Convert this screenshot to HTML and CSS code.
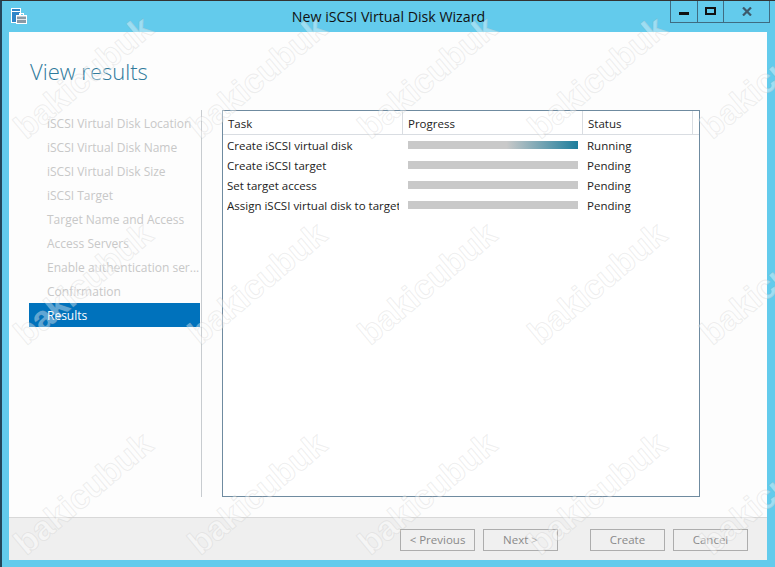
FILE: index.html
```html
<!DOCTYPE html>
<html lang="en">
<head>
<meta charset="utf-8">
<title>New iSCSI Virtual Disk Wizard</title>
<link rel="stylesheet" href="styles.css">
</head>
<body>
<div class="window">
  <header class="titlebar">
    <svg class="app-icon" width="16" height="16" viewBox="0 0 16 16">
      <rect x="0.5" y="0.5" width="9" height="14" fill="#2f86c8" stroke="#fff"/>
      <rect x="1" y="3" width="8" height="1" fill="#fff"/>
      <rect x="5" y="7" width="11" height="9" fill="#fff"/>
      <rect x="6" y="8.5" width="9" height="6.5" fill="#8a9aa6"/>
      <rect x="6" y="11" width="9" height="1" fill="#dfe6ea"/>
      <rect x="8.5" y="5.5" width="4" height="2" fill="none" stroke="#fff"/>
    </svg>
    <h1 class="window-title">New iSCSI Virtual Disk Wizard</h1>
    <div class="caption-buttons">
      <div class="cap cap-min"><span class="min-glyph"></span></div>
      <div class="cap cap-max"><span class="max-glyph"></span></div>
      <div class="cap cap-close">
        <svg width="10" height="9" viewBox="0 0 10 9"><path d="M1 0.5 L9 8.5 M9 0.5 L1 8.5" stroke="#3c5a6c" stroke-width="2.2" fill="none"/></svg>
      </div>
    </div>
  </header>
  <div class="client">
    <main class="content">
      <h2 class="page-title">View results</h2>
      <div class="columns">
        <nav class="steps">
          <div class="step">iSCSI Virtual Disk Location</div>
          <div class="step">iSCSI Virtual Disk Name</div>
          <div class="step">iSCSI Virtual Disk Size</div>
          <div class="step">iSCSI Target</div>
          <div class="step">Target Name and Access</div>
          <div class="step">Access Servers</div>
          <div class="step">Enable authentication ser...</div>
          <div class="step">Confirmation</div>
          <div class="step step-active">Results</div>
        </nav>
        <section class="panel">
          <div class="thead">
            <div class="th th-task">Task</div>
            <div class="th th-progress">Progress</div>
            <div class="th th-status">Status</div>
            <div class="th th-rest"></div>
          </div>
          <div class="row">
            <div class="cell-task">Create iSCSI virtual disk</div>
            <div class="cell-progress"><div class="bar bar-running"></div></div>
            <div class="cell-status">Running</div>
          </div>
          <div class="row">
            <div class="cell-task">Create iSCSI target</div>
            <div class="cell-progress"><div class="bar"></div></div>
            <div class="cell-status">Pending</div>
          </div>
          <div class="row">
            <div class="cell-task">Set target access</div>
            <div class="cell-progress"><div class="bar"></div></div>
            <div class="cell-status">Pending</div>
          </div>
          <div class="row">
            <div class="cell-task">Assign iSCSI virtual disk to target</div>
            <div class="cell-progress"><div class="bar"></div></div>
            <div class="cell-status">Pending</div>
          </div>
        </section>
      </div>
    </main>
    <footer class="footer">
      <button class="btn">&lt; Previous</button>
      <button class="btn">Next &gt;</button>
      <button class="btn btn-create">Create</button>
      <button class="btn">Cancel</button>
    </footer>
  </div>
  <div class="watermarks" aria-hidden="true">
    <span class="wm wm-c1 wm-r1">bakicubuk</span>
    <span class="wm wm-c2 wm-r1">bakicubuk</span>
    <span class="wm wm-c3 wm-r1">bakicubuk</span>
    <span class="wm wm-c4 wm-r1">bakicubuk</span>
    <span class="wm wm-c5 wm-r1">bakicubuk</span>
    <span class="wm wm-c1 wm-r2">bakicubuk</span>
    <span class="wm wm-c2 wm-r2">bakicubuk</span>
    <span class="wm wm-c3 wm-r2">bakicubuk</span>
    <span class="wm wm-c4 wm-r2">bakicubuk</span>
    <span class="wm wm-c5 wm-r2">bakicubuk</span>
    <span class="wm wm-c1 wm-r3">bakicubuk</span>
    <span class="wm wm-c2 wm-r3">bakicubuk</span>
    <span class="wm wm-c3 wm-r3">bakicubuk</span>
    <span class="wm wm-c4 wm-r3">bakicubuk</span>
    <span class="wm wm-c5 wm-r3">bakicubuk</span>
  </div>
</div>
</body>
</html>
```
FILE: styles.css
```css
* { box-sizing: border-box; }
html, body { margin: 0; padding: 0; }
body { width: 775px; height: 567px; overflow: hidden; font-family: "Open Sans", "Noto Sans", sans-serif; font-size: 11.5px; color: #222; }

.window { position: relative; width: 775px; height: 567px; background: #63cbec; border-top: 1px solid #333; border-left: 2px solid #24465a; overflow: hidden; }

.titlebar { position: relative; height: 31px; display: flex; align-items: center; justify-content: center; }
.app-icon { position: absolute; left: 9px; top: 7px; }
.window-title { margin: 0; font-size: 14.2px; font-weight: 400; color: #111; }
.caption-buttons { position: absolute; top: 0; left: 668px; display: flex; height: 22px; border: 1px solid #3f6c82; border-top: 0; }
.cap { display: flex; align-items: center; justify-content: center; height: 21px; }
.cap-min { width: 27px; border-right: 1px solid #3f6c82; }
.cap-max { width: 26px; border-right: 1px solid #3f6c82; }
.cap-close { width: 45px; }
.min-glyph { width: 10px; height: 3px; background: #111; margin-top: 4px; }
.max-glyph { width: 11px; height: 8px; border: 2px solid #111; margin-top: -2px; }

.client { margin-left: 7px; width: 758px; height: 528px; background: #fdfdfd; display: flex; flex-direction: column; }
.content { flex: 1; padding: 0 67px 20px 20px; display: flex; flex-direction: column; }
.page-title { margin: 21px 0 0 1px; height: 57px; font-size: 22px; font-weight: 300; color: #2f7a9c; line-height: 36px; }
.columns { display: flex; flex: 1; }

.steps { width: 173px; border-right: 1px solid #c8ccd0; padding-top: 1px; }
.step { height: 24px; line-height: 26px; padding-left: 18px; width: 171px; font-size: 12px; color: #c8c8c8; white-space: nowrap; overflow: hidden; }
.step-active { background: #0072bc; color: #fff; }

.panel { margin-left: 20px; width: 478px; border: 1px solid #6f8ba0; background: #fff; }
.thead { display: flex; height: 24px; border-bottom: 1px solid #d9dde2; }
.th { height: 23px; line-height: 25px; padding-left: 5px; color: #222; border-right: 1px solid #d9dde2; }
.th-task { width: 180px; }
.th-progress { width: 180px; }
.th-status { width: 110px; }
.th-rest { flex: 1; border-right: 0; }

.row { display: flex; height: 20px; align-items: center; }
.cell-task { width: 172px; margin-left: 4px; margin-right: 4px; white-space: nowrap; overflow: hidden; }
.cell-progress { width: 180px; padding-left: 5px; }
.bar { width: 170px; height: 8px; background: #c9c9c9; }
.bar-running { background: linear-gradient(to right, #c9c9c9 0%, #c9c9c9 58%, #1c7d9c 100%); }
.cell-status { margin-left: 4px; }

.footer { height: 43px; background: #efefef; border-top: 1px solid #d8d8d8; display: flex; align-items: flex-start; padding: 11px 0 0 391px; gap: 8px; }
.btn { width: 75px; height: 22px; padding: 0 0 2px; background: #f0f0f0; border: 1px solid #adadad; font: inherit; color: #8a8a8a; }
.btn-create { margin-left: 24px; }

.watermarks { position: absolute; inset: 0; pointer-events: none; }
.wm { position: absolute; width: 190px; text-align: center; font-family: "Liberation Sans", sans-serif; font-weight: 700; font-size: 34px; line-height: 40px; color: rgba(255,255,255,0.4); -webkit-text-stroke: 1px rgba(170,170,170,0.2); transform: rotate(-40deg); white-space: nowrap; }
.wm-c1 { left: -14px; }
.wm-c2 { left: 160px; }
.wm-c3 { left: 330px; }
.wm-c4 { left: 500px; }
.wm-c5 { left: 672px; }
.wm-r1 { top: 56px; }
.wm-r2 { top: 262px; }
.wm-r3 { top: 472px; }
```
